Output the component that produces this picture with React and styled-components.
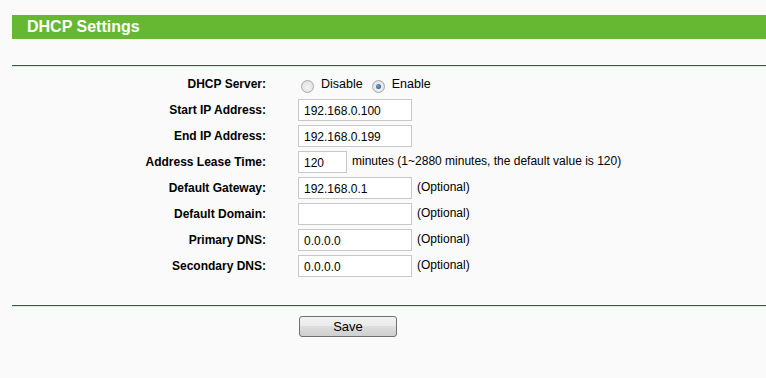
import styled, { createGlobalStyle } from "styled-components";

const Global = createGlobalStyle`
  html, body {
    margin: 0;
    padding: 0;
    background: #fafafa;
    font-family: "Liberation Sans", Arial, sans-serif;
    font-size: 12px;
    color: #000;
  }
`;

const Page = styled.div`
  padding: 15px 0 0 12px;
`;

const TitleBar = styled.div`
  height: 24px;
  background: #66b833;
  color: #fff;
  font-weight: bold;
  font-size: 16px;
  line-height: 24px;
  padding-left: 15px;
`;

const Rule = styled.div`
  margin-top: ${(p) => p.top}px;
  height: 1px;
  background: #2a6249;
  border-bottom: 1px solid #d6eadc;
`;

const Form = styled.div`
  display: grid;
  grid-template-columns: 254px auto;
  column-gap: 32px;
  grid-auto-rows: 26px;
  padding-top: 4px;
`;

const Label = styled.div`
  font-weight: bold;
  text-align: right;
  display: flex;
  align-items: center;
  justify-content: flex-end;
`;

const Field = styled.div`
  display: flex;
  align-items: center;
  gap: 5px;
`;

const Input = styled.input`
  box-sizing: border-box;
  width: ${(p) => p.w || 114}px;
  height: 22px;
  border: 1px solid #c8c8c8;
  background: #fff;
  font-family: "Liberation Sans", Arial, sans-serif;
  font-size: 12px;
  padding: 2px 5px 0;
  margin: 0;
  outline: none;
  color: #000;
`;

const Note = styled.span`
  padding-bottom: 2px;
`;

const RadioGroup = styled.label`
  display: flex;
  align-items: center;
  gap: 7px;
  margin-right: 1px;
  font-size: 12.5px;
`;

const Radio = styled.input.attrs({ type: "radio" })`
  appearance: none;
  width: 13px;
  height: 13px;
  margin: 4px 0 0 3px;
  border-radius: 50%;
  border: 1px solid #a8a8a8;
  background: radial-gradient(circle at 50% 60%, #f4f4f4 0%, #dcdcdc 100%);
  box-sizing: border-box;
  position: relative;
  &:checked::after {
    content: "";
    position: absolute;
    left: 3px;
    top: 3px;
    width: 5px;
    height: 5px;
    border-radius: 50%;
    background: radial-gradient(circle at 40% 40%, #6aa3d6 0%, #1c4e86 100%);
  }
`;

const Footer = styled.div`
  display: flex;
  padding: 9px 0 0 287px;
`;

const Button = styled.button`
  width: 98px;
  height: 21px;
  border: 1px solid #707070;
  border-radius: 3px;
  background: linear-gradient(#f2f2f2 0%, #ebebeb 45%, #dddddd 50%, #cfcfcf 100%);
  font-family: "Liberation Sans", Arial, sans-serif;
  font-size: 13px;
  color: #000;
  padding: 0;
`;

const rows = [
  { label: "Start IP Address:", value: "192.168.0.100" },
  { label: "End IP Address:", value: "192.168.0.199" },
  {
    label: "Address Lease Time:",
    value: "120",
    w: 49,
    note: "minutes (1~2880 minutes, the default value is 120)",
  },
  { label: "Default Gateway:", value: "192.168.0.1", note: "(Optional)" },
  { label: "Default Domain:", value: "", note: "(Optional)" },
  { label: "Primary DNS:", value: "0.0.0.0", note: "(Optional)" },
  { label: "Secondary DNS:", value: "0.0.0.0", note: "(Optional)" },
];

export default function App() {
  return (
    <Page>
      <Global />
      <TitleBar>DHCP Settings</TitleBar>
      <Rule top={26} />
      <Form>
        <Label>DHCP Server:</Label>
        <Field>
          <RadioGroup>
            <Radio name="dhcp" />
            <span>Disable</span>
          </RadioGroup>
          <RadioGroup>
            <Radio name="dhcp" defaultChecked />
            <span>Enable</span>
          </RadioGroup>
        </Field>
        {rows.map((r) => (
          <>
            <Label key={r.label + "l"}>{r.label}</Label>
            <Field key={r.label + "f"}>
              <Input w={r.w} defaultValue={r.value} />
              {r.note && <Note>{r.note}</Note>}
            </Field>
          </>
        ))}
      </Form>
      <Rule top={26} />
      <Footer>
        <Button>Save</Button>
      </Footer>
    </Page>
  );
}
